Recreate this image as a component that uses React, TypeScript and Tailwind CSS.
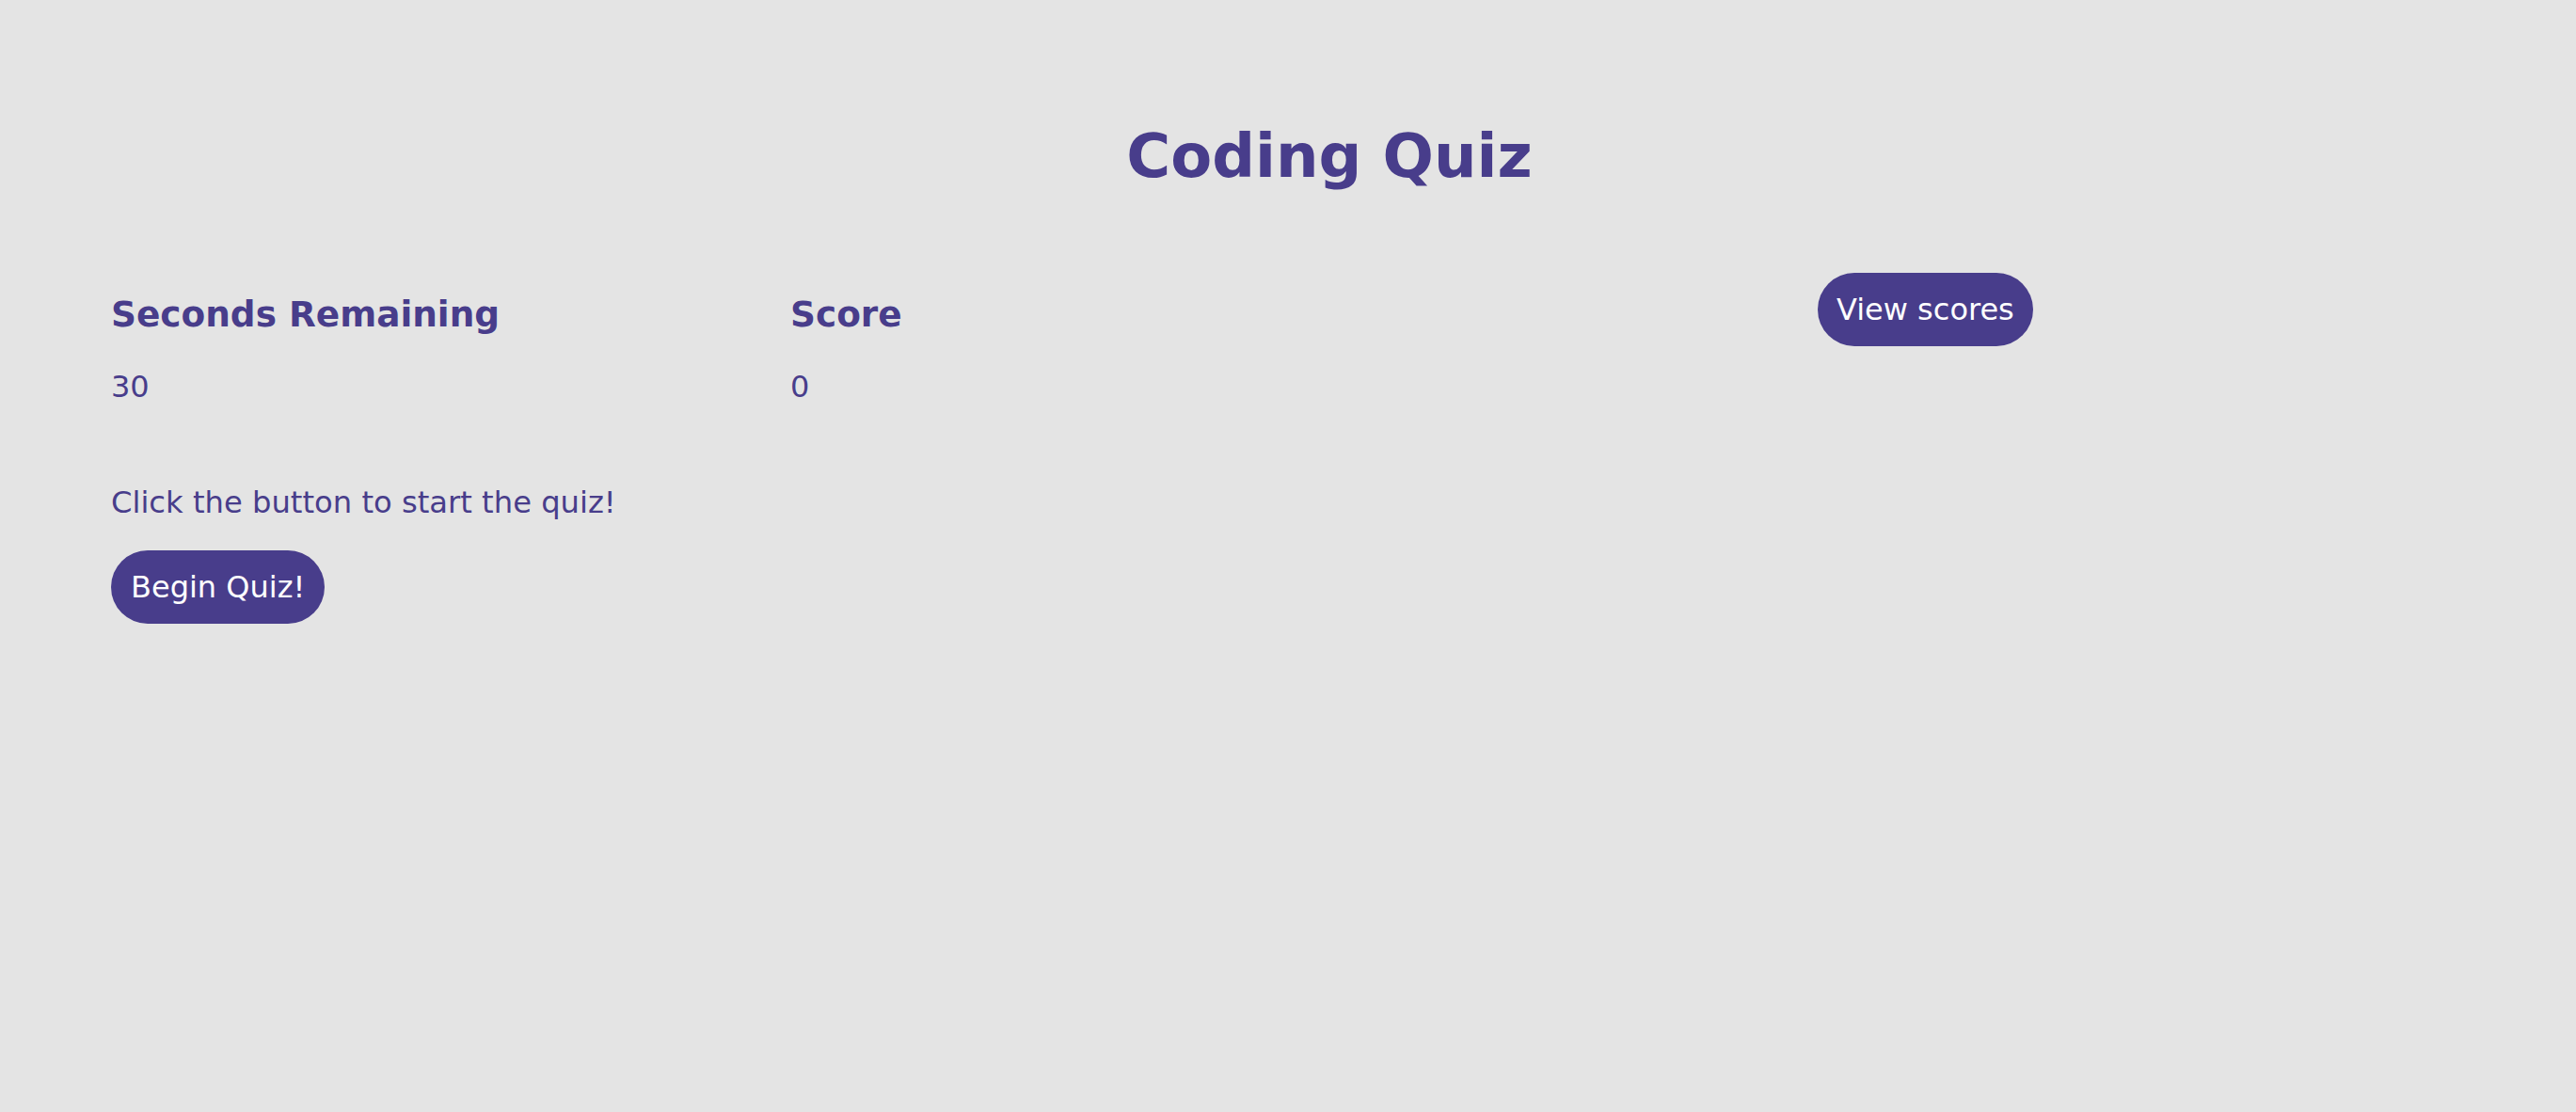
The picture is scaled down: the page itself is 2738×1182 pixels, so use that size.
export default function App() {
  return (
    <div className="min-h-screen bg-[#e4e4e4] text-[#483d8b] font-['DejaVu_Sans',Verdana,sans-serif] text-[32px] leading-[normal]">
      {/* Header */}
      <h1 className="pt-[129px] pl-[88px] text-center text-[64px] font-bold leading-[normal]">Coding Quiz</h1>

      {/* Stats row */}
      <div className="flex items-start pl-[118px] mt-[87px]">
        <div className="w-[722px] pt-[22px]">
          <h3 className="text-[37.44px] font-bold leading-[normal]">Seconds Remaining</h3>
          <p className="mt-[36px]">30</p>
        </div>
        <div className="w-[1092px] pt-[22px]">
          <h3 className="text-[37.44px] font-bold leading-[normal]">Score</h3>
          <p className="mt-[36px]">0</p>
        </div>
        <button className="rounded-full bg-[#483d8b] px-5 py-5 text-white leading-[normal]">View scores</button>
      </div>

      {/* Start */}
      <div className="pl-[118px] mt-[85px]">
        <p className="text-[32.2px]">Click the button to start the quiz!</p>
        <button className="mt-[32px] rounded-full bg-[#483d8b] px-[21px] py-5 text-white leading-[normal]">
          Begin Quiz!
        </button>
      </div>
    </div>
  )
}
